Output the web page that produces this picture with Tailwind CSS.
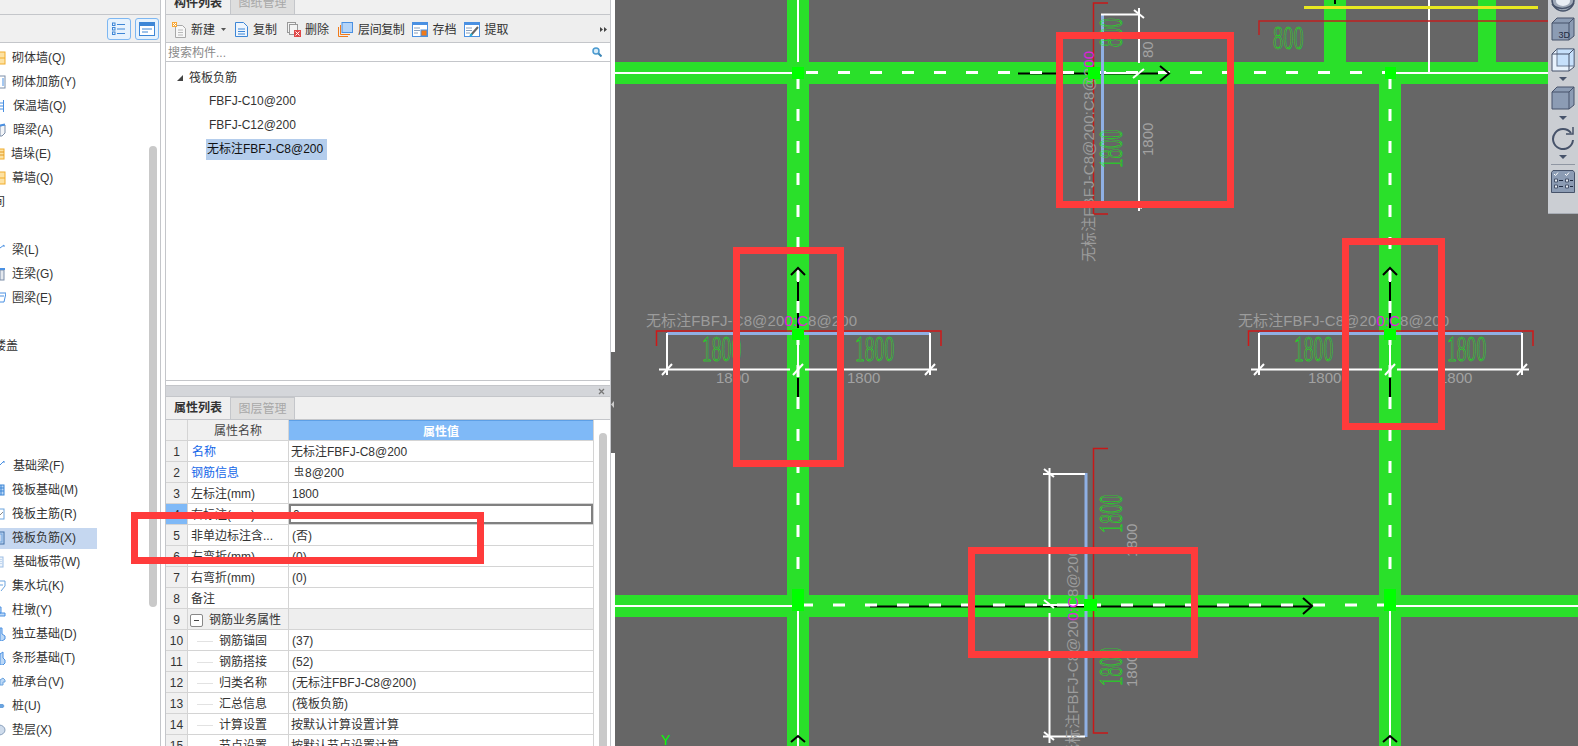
<!DOCTYPE html>
<html lang="zh">
<head>
<meta charset="UTF-8">
<title>筏板负筋</title>
<script src="https://cdn.jsdelivr.net/npm/@tailwindcss/browser@4"></script>
</head>
<body class="m-0 overflow-hidden bg-white">
<div class="relative flex w-[1578px] h-[746px] overflow-hidden bg-white text-[12px] leading-[16px] text-[#333] font-['Liberation_Sans','Noto_Sans_CJK_SC',sans-serif]">

  <!-- 左侧导航 -->
  <aside class="w-[161px] h-full shrink-0 relative overflow-hidden border-r border-[#c4c6ca]">
    <div class="h-[15px] bg-[#f0f0f0] border-b border-[#c4c6ca]"></div>
    <div class="h-[28px] bg-[#f0f0f0] border-b border-[#c4c6ca] flex items-center justify-end gap-[4px] pr-[1px]">
      <div class="w-[24px] h-[22px] rounded-[3px] border border-[#7db7f2] bg-[#e6f2fd] flex items-center justify-center">
        <svg width="14" height="14" viewBox="0 0 14 14" fill="none" stroke="#3d86d6"><path d="M5 2.5h8M5 7h8M5 11.5h8"/><rect x="0.5" y="1" width="2.5" height="2.5"/><rect x="0.5" y="5.5" width="2.5" height="2.5"/><rect x="0.5" y="10" width="2.5" height="2.5"/></svg>
      </div>
      <div class="w-[24px] h-[22px] rounded-[3px] border border-[#7db7f2] bg-[#e6f2fd] flex items-center justify-center">
        <svg width="16" height="14" viewBox="0 0 16 14" fill="none"><rect x="0.5" y="0.5" width="15" height="13" fill="#fff" stroke="#3d86d6"/><rect x="1" y="1" width="14" height="3" fill="#3d86d6"/><path d="M3 7h10M3 10h6" stroke="#3d86d6"/></svg>
      </div>
    </div>
    <div class="pt-[3px]">
      <div class="h-6 flex items-center"><svg class="shrink-0" width="6" height="14" viewBox="0 0 6 14"><rect x="-6" y="1" width="11" height="12" fill="#fde2a2" stroke="#f0ac2c"/><path d="M0 7h5" stroke="#f0ac2c"/></svg><span class="ml-[6px]">砌体墙(Q)</span></div>
      <div class="h-6 flex items-center"><svg class="shrink-0" width="6" height="14" viewBox="0 0 6 14"><rect x="-6" y="1" width="11" height="12" fill="#fff" stroke="#7d8ea8"/><path d="M3 3v8" stroke="#4a90e2"/></svg><span class="ml-[6px]">砌体加筋(Y)</span></div>
      <div class="h-6 flex items-center"><svg class="shrink-0" width="6" height="14" viewBox="0 0 6 14" fill="none" stroke="#4a90e2"><path d="M3.500 1v12M0 4h3M0 7h3M0 10h3"/></svg><span class="ml-[7px]">保温墙(Q)</span></div>
      <div class="h-6 flex items-center"><svg class="shrink-0" width="6" height="14" viewBox="0 0 6 14"><path d="M0 3l5-1v8l-3 3H0z" fill="#f3f5f8" stroke="#7d8ea8"/><path d="M0 2.500l5-1" stroke="#4a90e2" stroke-width="2"/></svg><span class="ml-[7px]">暗梁(A)</span></div>
      <div class="h-6 flex items-center"><svg class="shrink-0" width="5" height="14" viewBox="0 0 5 14"><rect x="-5" y="2" width="9" height="10" fill="#fde2a2" stroke="#f0ac2c"/><path d="M0 5h4M0 8h4" stroke="#e0961c"/></svg><span class="ml-[6px]">墙垛(E)</span></div>
      <div class="h-6 flex items-center"><svg class="shrink-0" width="6" height="14" viewBox="0 0 6 14"><rect x="-6" y="1" width="11" height="12" fill="#fde2a2" stroke="#f0ac2c"/><path d="M0 7h5" stroke="#f0ac2c"/></svg><span class="ml-[6px]">幕墙(Q)</span></div>
      <div class="h-6 flex items-center"><span class="ml-[-7px]">间</span></div>
      <div class="h-6"></div>
      <div class="h-6 flex items-center"><svg class="shrink-0" width="6" height="14" viewBox="0 0 6 14" fill="none" stroke="#4a90e2"><path d="M0 5l4-3v2"/></svg><span class="ml-[6px]">梁(L)</span></div>
      <div class="h-6 flex items-center"><svg class="shrink-0" width="6" height="14" viewBox="0 0 6 14"><rect x="0" y="3" width="4" height="10" fill="#e4e8ee" stroke="#7d8ea8"/><path d="M0 2h5" stroke="#4a90e2" stroke-width="2"/></svg><span class="ml-[6px]">连梁(G)</span></div>
      <div class="h-6 flex items-center"><svg class="shrink-0" width="6" height="14" viewBox="0 0 6 14" fill="none" stroke="#4a90e2"><path d="M0 2h6l-2 9H0M0 5h4"/></svg><span class="ml-[6px]">圈梁(E)</span></div>
      <div class="h-6"></div>
      <div class="h-6 flex items-center"><span class="ml-[-6px]">楼盖</span></div>
      <div class="h-6"></div>
      <div class="h-6"></div>
      <div class="h-6"></div>
      <div class="h-6"></div>
      <div class="h-6 flex items-center"><svg class="shrink-0" width="6" height="14" viewBox="0 0 6 14" fill="none" stroke="#4a90e2"><path d="M0 6l4-4v2"/></svg><span class="ml-[7px]">基础梁(F)</span></div>
      <div class="h-6 flex items-center"><svg class="shrink-0" width="6" height="14" viewBox="0 0 6 14"><rect x="-6" y="2" width="10" height="10" fill="#bcd8f6" stroke="#3d86d6"/><path d="M1 2v10M0 5h4M0 8h4" stroke="#3d86d6"/></svg><span class="ml-[6px]">筏板基础(M)</span></div>
      <div class="h-6 flex items-center"><svg class="shrink-0" width="6" height="14" viewBox="0 0 6 14" fill="none"><rect x="-6" y="2" width="10" height="10" fill="#fff" stroke="#6aa3de"/><path d="M0 8l3-3" stroke="#8a8a8a"/></svg><span class="ml-[6px]">筏板主筋(R)</span></div>
      <div class="h-6 flex items-center"><div class="w-[97px] h-[21px] bg-[#c5d7f0] flex items-center"><svg class="shrink-0" width="6" height="14" viewBox="0 0 6 14" fill="none"><rect x="-6" y="1" width="10" height="12" stroke="#3d6fa8"/><rect x="-2" y="3" width="4" height="8" stroke="#6aa3de"/></svg><span class="ml-[6px]">筏板负筋(X)</span></div></div>
      <div class="h-6 flex items-center"><svg class="shrink-0" width="6" height="14" viewBox="0 0 6 14" stroke="#9bbde4" fill="#eef4fb"><rect x="-4" y="2" width="7" height="10"/><path d="M1 4v6" stroke-dasharray="1 1"/></svg><span class="ml-[7px]">基础板带(W)</span></div>
      <div class="h-6 flex items-center"><svg class="shrink-0" width="6" height="14" viewBox="0 0 6 14" fill="none" stroke="#6aa3de"><path d="M0 2h5v5l-4 5M0 6h3"/></svg><span class="ml-[6px]">集水坑(K)</span></div>
      <div class="h-6 flex items-center"><svg class="shrink-0" width="6" height="14" viewBox="0 0 6 14" fill="#bcd8f6" stroke="#4a90e2"><path d="M-1 10h6v3h-6zM-1 4h2v6h-2z"/></svg><span class="ml-[6px]">柱墩(Y)</span></div>
      <div class="h-6 flex items-center"><svg class="shrink-0" width="6" height="14" viewBox="0 0 6 14" fill="#bcd8f6" stroke="#4a90e2"><path d="M0 1h2v6l3 2v3l-3 2H0z"/></svg><span class="ml-[6px]">独立基础(D)</span></div>
      <div class="h-6 flex items-center"><svg class="shrink-0" width="6" height="14" viewBox="0 0 6 14" fill="#bcd8f6" stroke="#4a90e2"><path d="M0 3l3-2v6l2 2v3l-2 2H0z"/></svg><span class="ml-[6px]">条形基础(T)</span></div>
      <div class="h-6 flex items-center"><svg class="shrink-0" width="6" height="14" viewBox="0 0 6 14" fill="#bcd8f6" stroke="#6aa3de"><path d="M0 5l3-2 2 2v2H3v3H0z"/></svg><span class="ml-[6px]">桩承台(V)</span></div>
      <div class="h-6 flex items-center"><svg class="shrink-0" width="6" height="14" viewBox="0 0 6 14" fill="#6aa3de"><path d="M0 5h3l1.500 2L3 9H0z"/></svg><span class="ml-[6px]">桩(U)</span></div>
      <div class="h-6 flex items-center"><svg class="shrink-0" width="6" height="14" viewBox="0 0 6 14"><ellipse cx="-1" cy="7" rx="6" ry="5" fill="#cfdcec" stroke="#8aa0bc"/></svg><span class="ml-[6px]">垫层(X)</span></div>
    </div>
    <div class="absolute left-[149px] top-[146px] w-[8px] h-[461px] rounded-[4px] bg-[#c9c9c9]"></div>
  </aside>

  <div class="w-[4px] shrink-0"></div>

  <!-- 构件列表 + 属性列表 -->
  <section class="w-[446px] h-full shrink-0 border-x border-[#c4c6ca] flex flex-col">
    <div class="h-[15px] bg-[#f0f0f0] flex overflow-hidden border-b border-[#c4c6ca]">
      <div class="w-[65px] flex items-end justify-center pb-[3px] font-bold text-[#333] border-r border-[#c4c6ca]">构件列表</div>
      <div class="w-[64px] flex items-end justify-center pb-[3px] bg-[#dedede] text-[#a8a8a8] border-r border-[#c4c6ca]">图纸管理</div>
    </div>
    <div class="h-[28px] pt-[2px] bg-[#eeeeee] border-b border-[#c4c6ca] flex items-center">
      <svg class="ml-[6px] shrink-0" width="15" height="16" viewBox="0 0 15 16"><path d="M3.500 3.500h7l3 3v9h-10z" fill="#f7f7f7" stroke="#a8a8a8"/><path d="M6 8h5M6 10.500h5M6 13h5" stroke="#b8b8b8"/><path d="M0 0h5v5H0z" fill="#f8a838"/><path d="M1 1l3 3M4 1L1 4" stroke="#fff"/></svg>
      <span class="ml-[4px]">新建</span>
      <svg class="ml-[6px] shrink-0" width="5" height="3" viewBox="0 0 5 3"><path d="M0 0h5L2.500 3z" fill="#555"/></svg>
      <svg class="ml-[9px] shrink-0" width="13" height="15" viewBox="0 0 13 15"><path d="M.5.500h8l4 4v10H.5z" fill="#eef5fd" stroke="#3d86d6"/><path d="M3 7h7M3 9.500h7M3 12h7" stroke="#3d86d6"/></svg>
      <span class="ml-[5px]">复制</span>
      <svg class="ml-[10px] shrink-0" width="14" height="15" viewBox="0 0 14 15"><rect x=".5" y=".5" width="8" height="10" fill="#f4f4f4" stroke="#999"/><rect x="2.500" y="2.500" width="8" height="10" fill="#f4f4f4" stroke="#999"/><rect x="7" y="8" width="7" height="7" fill="#e04848"/><path d="M8.500 9.500l4 4M12.500 9.500l-4 4" stroke="#fff"/></svg>
      <span class="ml-[4px]">删除</span>
      <svg class="ml-[9px] shrink-0" width="15" height="15" viewBox="0 0 15 15"><path d="M.5 5v9.500H10M2.500 3v9.500H12" fill="none" stroke="#f07a1a"/><rect x="4" y=".5" width="10.500" height="10" fill="#b4d4f8" stroke="#4a90e2"/></svg>
      <span class="ml-[5px] tracking-[-0.4px]">层间复制</span>
      <svg class="ml-[8px] shrink-0" width="16" height="15" viewBox="0 0 16 15"><rect x=".5" y=".5" width="15" height="14" fill="#fff" stroke="#4a90e2"/><rect x="0" y="0" width="16" height="3" fill="#4a90e2"/><path d="M2 6h6M2 8.500h6M2 11h4" stroke="#8aa0bc"/><rect x="9" y="8" width="6" height="6" fill="#f07a1a" stroke="#4a90e2"/></svg>
      <span class="ml-[4px]">存档</span>
      <svg class="ml-[8px] shrink-0" width="16" height="15" viewBox="0 0 16 15"><rect x=".5" y=".5" width="15" height="14" fill="#fff" stroke="#4a90e2"/><rect x="0" y="0" width="16" height="3" fill="#4a90e2"/><path d="M2 6h6M2 8.500h6M2 11h4" stroke="#8aa0bc"/><path d="M7 13l7-8" stroke="#666" stroke-width="2"/><path d="M6 14l2-2" stroke="#20b0d8" stroke-width="2"/></svg>
      <span class="ml-[4px]">提取</span>
      <svg class="ml-auto mr-[3px] shrink-0" width="7" height="5" viewBox="0 0 7 5" fill="#444"><path d="M0 0l3 2.500L0 5zM4 0l3 2.500L4 5z"/></svg>
    </div>
    <div class="h-[19px] pt-[2px] bg-white border-b border-[#c4c6ca] flex items-center pl-[2px] pr-[8px] text-[#8a8a8a]">
      <span>搜索构件...</span>
      <svg class="ml-auto -mt-[2px]" width="10" height="10" viewBox="0 0 10 10" fill="none"><circle cx="4" cy="4" r="3" fill="#d8ecf8" stroke="#4a9ad0" stroke-width="1.500"/><path d="M6.500 6.500L9.500 9.500" stroke="#3d86b6" stroke-width="2"/></svg>
    </div>
    <div class="h-[319px] border-b border-[#c4c6ca] bg-white relative pt-[3px]">
      <div class="h-6 pt-[1px] flex items-center">
        <svg class="ml-[11px] shrink-0" width="6" height="6" viewBox="0 0 6 6"><path d="M6 0v6H0z" fill="#444"/></svg>
        <span class="ml-[6px]">筏板负筋</span>
      </div>
      <div class="h-6 flex items-center pl-[43px]">FBFJ-C10@200</div>
      <div class="h-6 flex items-center pl-[43px]">FBFJ-C12@200</div>
      <div class="h-6 flex items-center"><div class="ml-[40px] w-[121px] h-[21px] bg-[#b4cdec] flex items-center pl-[1px] text-[#111]">无标注FBFJ-C8@200</div></div>
    </div>
    <div class="h-[4px]"></div>
    <div class="h-[12px] bg-[#d4d6da] border-y border-[#c4c6ca] flex items-center justify-end pr-[5px]">
      <svg width="7" height="7" viewBox="0 0 7 7" stroke="#777" stroke-width="1.300"><path d="M1 1l5 5M6 1L1 6"/></svg>
    </div>
    <div class="h-[23px] bg-[#f0f0f0] border-b border-[#c4c6ca] flex">
      <div class="w-[65px] flex items-center justify-center font-bold border-r border-[#c4c6ca]">属性列表</div>
      <div class="w-[64px] flex items-center justify-center bg-[#dedede] text-[#a8a8a8] border-r border-t border-[#c4c6ca]">图层管理</div>
    </div>
    <div class="flex flex-1 overflow-hidden">
      <div class="w-[428px] shrink-0 border-r border-[#d4d4d4] [&>div>div]:pt-[2px]">
        <div class="flex h-[21px] border-b border-[#d4d4d4]">
          <div class="w-[22px] bg-[#f0f0f0] border-r border-[#d4d4d4]"></div>
          <div class="w-[101px] bg-[#f0f0f0] border-r border-[#d4d4d4] flex items-center justify-center text-[#444]">属性名称</div>
          <div class="flex-1 bg-[#7fb9f7] border-t border-[#5d9fe6] flex items-center justify-center font-bold text-white">属性值</div>
        </div>
        <div class="flex h-[21px] border-b border-[#d4d4d4]"><div class="w-[22px] bg-[#f0f0f0] border-r border-[#d4d4d4] flex items-center justify-center">1</div><div class="w-[101px] border-r border-[#d4d4d4] flex items-center pl-[4px] text-[#1668e8]">名称</div><div class="flex-1 flex items-center pl-[2px]">无标注FBFJ-C8@200</div></div>
        <div class="flex h-[21px] border-b border-[#d4d4d4]"><div class="w-[22px] bg-[#f0f0f0] border-r border-[#d4d4d4] flex items-center justify-center">2</div><div class="w-[101px] border-r border-[#d4d4d4] flex items-center pl-[3px] text-[#1668e8]">钢筋信息</div><div class="flex-1 flex items-center pl-[4px]"><span class="text-[10px] -mt-[3px] mr-[1px] pl-[1px]">虫</span>8@200</div></div>
        <div class="flex h-[21px] border-b border-[#d4d4d4]"><div class="w-[22px] bg-[#f0f0f0] border-r border-[#d4d4d4] flex items-center justify-center">3</div><div class="w-[101px] border-r border-[#d4d4d4] flex items-center pl-[3px]">左标注(mm)</div><div class="flex-1 flex items-center pl-[3px]">1800</div></div>
        <div class="flex h-[21px] border-b border-[#d4d4d4]"><div class="w-[22px] bg-[#7fb9f7] border-r border-[#d4d4d4] flex items-center justify-center">4</div><div class="w-[101px] border-r border-[#d4d4d4] flex items-center pl-[3px]">右标注(mm)</div><div class="flex-1 flex items-center pl-[2px] border-2 border-[#808080]">0</div></div>
        <div class="flex h-[21px] border-b border-[#d4d4d4]"><div class="w-[22px] bg-[#f0f0f0] border-r border-[#d4d4d4] flex items-center justify-center">5</div><div class="w-[101px] border-r border-[#d4d4d4] flex items-center pl-[3px]">非单边标注含...</div><div class="flex-1 flex items-center pl-[3px]">(否)</div></div>
        <div class="flex h-[21px] border-b border-[#d4d4d4]"><div class="w-[22px] bg-[#f0f0f0] border-r border-[#d4d4d4] flex items-center justify-center">6</div><div class="w-[101px] border-r border-[#d4d4d4] flex items-center pl-[3px]">左弯折(mm)</div><div class="flex-1 flex items-center pl-[3px]">(0)</div></div>
        <div class="flex h-[21px] border-b border-[#d4d4d4]"><div class="w-[22px] bg-[#f0f0f0] border-r border-[#d4d4d4] flex items-center justify-center">7</div><div class="w-[101px] border-r border-[#d4d4d4] flex items-center pl-[3px]">右弯折(mm)</div><div class="flex-1 flex items-center pl-[3px]">(0)</div></div>
        <div class="flex h-[21px] border-b border-[#d4d4d4]"><div class="w-[22px] bg-[#f0f0f0] border-r border-[#d4d4d4] flex items-center justify-center">8</div><div class="w-[101px] border-r border-[#d4d4d4] flex items-center pl-[3px]">备注</div><div class="flex-1"></div></div>
        <div class="flex h-[21px] border-b border-[#d4d4d4]"><div class="w-[22px] bg-[#f0f0f0] border-r border-[#d4d4d4] flex items-center justify-center">9</div><div class="w-[101px] border-r border-[#d4d4d4] bg-[#f0f0f0] flex items-center pl-[2px]"><span class="w-[13px] h-[13px] rounded-[2px] border border-[#888] bg-white flex items-center justify-center"><span class="block w-[5px] h-px bg-[#444]"></span></span><span class="ml-[6px]">钢筋业务属性</span></div><div class="flex-1 bg-[#eeeeee]"></div></div>
        <div class="flex h-[21px] border-b border-[#d4d4d4]"><div class="w-[22px] bg-[#f0f0f0] border-r border-[#d4d4d4] flex items-center justify-center">10</div><div class="w-[101px] border-r border-[#d4d4d4] flex items-center pl-[9px]"><span class="block w-[16px] h-px bg-[#e2e2e2]"></span><span class="ml-[6px]">钢筋锚固</span></div><div class="flex-1 flex items-center pl-[3px]">(37)</div></div>
        <div class="flex h-[21px] border-b border-[#d4d4d4]"><div class="w-[22px] bg-[#f0f0f0] border-r border-[#d4d4d4] flex items-center justify-center">11</div><div class="w-[101px] border-r border-[#d4d4d4] flex items-center pl-[9px]"><span class="block w-[16px] h-px bg-[#e2e2e2]"></span><span class="ml-[6px]">钢筋搭接</span></div><div class="flex-1 flex items-center pl-[3px]">(52)</div></div>
        <div class="flex h-[21px] border-b border-[#d4d4d4]"><div class="w-[22px] bg-[#f0f0f0] border-r border-[#d4d4d4] flex items-center justify-center">12</div><div class="w-[101px] border-r border-[#d4d4d4] flex items-center pl-[9px]"><span class="block w-[16px] h-px bg-[#e2e2e2]"></span><span class="ml-[6px]">归类名称</span></div><div class="flex-1 flex items-center pl-[3px]">(无标注FBFJ-C8@200)</div></div>
        <div class="flex h-[21px] border-b border-[#d4d4d4]"><div class="w-[22px] bg-[#f0f0f0] border-r border-[#d4d4d4] flex items-center justify-center">13</div><div class="w-[101px] border-r border-[#d4d4d4] flex items-center pl-[9px]"><span class="block w-[16px] h-px bg-[#e2e2e2]"></span><span class="ml-[6px]">汇总信息</span></div><div class="flex-1 flex items-center pl-[3px]">(筏板负筋)</div></div>
        <div class="flex h-[21px] border-b border-[#d4d4d4]"><div class="w-[22px] bg-[#f0f0f0] border-r border-[#d4d4d4] flex items-center justify-center">14</div><div class="w-[101px] border-r border-[#d4d4d4] flex items-center pl-[9px]"><span class="block w-[16px] h-px bg-[#e2e2e2]"></span><span class="ml-[6px]">计算设置</span></div><div class="flex-1 flex items-center pl-[2px]">按默认计算设置计算</div></div>
        <div class="flex h-[21px] border-b border-[#d4d4d4]"><div class="w-[22px] bg-[#f0f0f0] border-r border-[#d4d4d4] flex items-center justify-center">15</div><div class="w-[101px] border-r border-[#d4d4d4] flex items-center pl-[9px]"><span class="block w-[16px] h-px bg-[#e2e2e2]"></span><span class="ml-[6px]">节点设置</span></div><div class="flex-1 flex items-center pl-[2px]">按默认节点设置计算</div></div>
      </div>
      <div class="flex-1 relative">
        <div class="absolute left-[5px] top-[13px] w-[8px] h-[400px] rounded-[4px] bg-[#c9c9c9]"></div>
      </div>
    </div>
  </section>

  <!-- 分隔条 -->
  <div class="w-[4px] shrink-0 relative">
    <div class="absolute left-0 top-[352px] w-[4px] h-[101px] bg-[#666] flex items-center justify-center">
      <svg width="4" height="7" viewBox="0 0 4 7" class="mt-[4px]"><path d="M3 0v7L0 3.500z" fill="#ccc"/></svg>
    </div>
  </div>

  <!-- 绘图区 -->
  <main class="relative flex-1 h-full bg-[#666666] overflow-hidden">
    <svg class="block" width="963" height="746" viewBox="615 0 963 746" fill="none">
      <defs>
        <g id="cross">
          <path d="M656.500 346v-15h284.500v15" stroke="#d01818" stroke-width="1.500"/>
          <path d="M667 333.500h263" stroke="#8fb0e4" stroke-width="3"/>
          <path d="M667 333v42M930 333v42" stroke="#fff" stroke-width="2"/>
          <path d="M659 369.500h131M805 369.500h132" stroke="#fff" stroke-width="2"/>
          <path d="M662 375l10-11M925 375l10-11M793 375l10-11" stroke="#fff" stroke-width="2"/>
          <path d="M798 268v14M798 340v27" stroke="#fff" stroke-width="2"/>
          <path d="M791 275l7-7 7 7" stroke="#000" stroke-width="2"/>
          <text x="646" y="326" font-family="Liberation Sans, Noto Sans CJK SC, sans-serif" font-size="15" fill="#9c9c9c" textLength="211">无标注FBFJ-C8@20<tspan fill="#e020e0">0:C</tspan>8@200</text>
          <g font-family="Liberation Serif, serif" font-size="35" stroke="#0f0" stroke-width=".55" fill="none">
            <text transform="translate(702,361) scale(.56,1)">1800</text>
            <text transform="translate(855,361) scale(.56,1)">1800</text>
          </g>
          <g font-family="Liberation Sans, sans-serif" font-size="15" fill="#a2a2a2">
            <text x="716" y="383">1800</text>
            <text x="847" y="383">1800</text>
          </g>
        </g>
      </defs>

      <!-- 梁 -->
      <g fill="#2ae02a">
        <rect x="615" y="62" width="963" height="22"/>
        <rect x="615" y="595" width="963" height="22"/>
        <rect x="787" y="0" width="22" height="746"/>
        <rect x="1379" y="72" width="22" height="674"/>
        <rect x="1324" y="0" width="22" height="62"/>
        <rect x="1478" y="0" width="18" height="62"/>
      </g>

      <!-- 轴线 -->
      <g stroke="#fff" stroke-width="2">
        <path d="M615 73h177M798 0v62M1396 73h160M1429 0v73"/>
        <path d="M615 606h177M798 611v135M1396 606h182M1390 611v135"/>
      </g>
      <path d="M1018 73.500h140M870 606.500h442M798 282v46M798 378v19M1390 282v46M1390 378v19" stroke="#000" stroke-width="2"/>
      <g stroke="#fff" stroke-width="3" stroke-dasharray="12 20">
        <path d="M806 72.500H1385"/>
        <path d="M801 605H1384"/>
        <path d="M798 77V589"/>
        <path d="M1390 77V589"/>
      </g>
      <path d="M1100 73h33M1043 605h41" stroke="#fff" stroke-width="2"/>
      <path d="M1160 66l9 7.500-9 7.500" stroke="#000" stroke-width="2"/>
      <path d="M1303 598l9 8-9 8" stroke="#000" stroke-width="2"/>
      <path d="M1335 0v4" stroke="#000" stroke-width="2"/>
      <path d="M791 742l7-6 7 6M1383 742l7-6 7 6" stroke="#000" stroke-width="2"/>
      <path d="M1304 7.500h234" stroke="#e8e820" stroke-width="3"/>
      <path d="M1259 35V21h289" stroke="#c02020" stroke-width="1.500"/>
      <text transform="translate(1273,49) scale(.6,1)" font-family="Liberation Serif, serif" font-size="34" stroke="#0f0" stroke-width=".55">800</text>

      <use href="#cross"/>
      <use href="#cross" x="592"/>

      <!-- 顶部竖向钢筋 -->
      <path d="M1108 3h-14.500v211h14.500" stroke="#c81818" stroke-width="1.500"/>
      <path d="M1102.500 14v188" stroke="#8fb0e4" stroke-width="3"/>
      <path d="M1101 14.500h38M1139 8v55M1139 80v131" stroke="#fff" stroke-width="2"/>
      <path d="M1134 10l10 8M1133 78l11 -9M1134 204l8 4" stroke="#fff" stroke-width="2"/>
      <text transform="translate(1094,262) rotate(-90)" font-family="Liberation Sans, Noto Sans CJK SC, sans-serif" font-size="15" fill="#9c9c9c" textLength="211">无标注FBFJ-C8@200:C8@2<tspan fill="#e020e0">00</tspan></text>
      <g font-family="Liberation Serif, serif" font-size="33" stroke="#0f0" stroke-width=".55">
        <text transform="translate(1122,168) rotate(-90) scale(.58,1)">1800</text>
        <text transform="translate(1122,47) rotate(-90) scale(.58,1)">800</text>
      </g>
      <g font-family="Liberation Sans, sans-serif" font-size="15" fill="#a2a2a2">
        <text transform="translate(1153,156) rotate(-90)">1800</text>
        <text transform="translate(1153,58) rotate(-90)">80</text>
      </g>

      <!-- 底部竖向钢筋 -->
      <path d="M1108 448.500h-14.500v284.500h14.500" stroke="#c81818" stroke-width="1.500"/>
      <path d="M1086 473v264" stroke="#8fb0e4" stroke-width="3"/>
      <path d="M1043 474h42M1043 736.500h42M1049.500 468v131M1049.500 613v130" stroke="#fff" stroke-width="2"/>
      <path d="M1044 469l10 8M1044 600l10 8M1044 732l10 8" stroke="#fff" stroke-width="2"/>
      <text transform="translate(1078,759) rotate(-90)" font-family="Liberation Sans, Noto Sans CJK SC, sans-serif" font-size="15" fill="#9c9c9c" textLength="211">无标注FBFJ-C8@20<tspan fill="#e020e0">0:C</tspan>8@200</text>
      <g font-family="Liberation Serif, serif" font-size="33" stroke="#0f0" stroke-width=".55">
        <text transform="translate(1122,533) rotate(-90) scale(.58,1)">1800</text>
        <text transform="translate(1122,686) rotate(-90) scale(.58,1)">1800</text>
      </g>
      <g font-family="Liberation Sans, sans-serif" font-size="15" fill="#a2a2a2">
        <text transform="translate(1137,557) rotate(-90)">1800</text>
        <text transform="translate(1137,687) rotate(-90)">1800</text>
      </g>

      <!-- 节点 -->
      <g fill="#00ff00">
        <rect x="792" y="67" width="12" height="12"/>
        <rect x="1385" y="67" width="11" height="12"/>
        <rect x="1088" y="67" width="12" height="12"/>
        <rect x="792" y="329" width="12" height="11"/>
        <rect x="1384" y="329" width="12" height="11"/>
        <rect x="792" y="589" width="12" height="22"/>
        <rect x="1084" y="599" width="13" height="12"/>
        <rect x="1384" y="589" width="12" height="22"/>
      </g>
      <text x="661" y="745" font-family="Liberation Sans, sans-serif" font-size="14" fill="#00ff00">Y</text>

      <!-- 标记框 -->
      <g stroke="#ff3b3b" stroke-width="7">
        <rect x="1059.500" y="35.500" width="171" height="169"/>
        <rect x="736.500" y="250.500" width="104" height="213"/>
        <rect x="1345.500" y="241.500" width="96" height="185"/>
        <rect x="971.500" y="550.500" width="223" height="104"/>
      </g>
    </svg>

    <!-- 右侧工具条 -->
    <div class="absolute left-[933px] top-0 w-[30px] h-[214px] bg-[#cbced3] border-b border-[#a8adb5] flex flex-col items-center">
      <svg class="shrink-0" width="24" height="14" viewBox="0 8 24 14"><circle cx="12" cy="8" r="11" fill="#9fa9b8" stroke="#47536a" stroke-width="1.500"/><ellipse cx="12" cy="9" rx="7" ry="5" fill="#e8edf4"/><path d="M1 12c5 6 16 6 22-1" stroke="#47536a" stroke-width="1.500" fill="none"/></svg>
      <svg class="mt-[3px] shrink-0" width="24" height="24" viewBox="0 0 24 24" stroke="#47536a"><path d="M1 6l5-5h17v18l-5 4H1z" fill="#8c9cb4"/><path d="M1 6h17v17M18 6l5-5" fill="none"/><text x="7.500" y="21" font-family="Liberation Sans, sans-serif" font-size="9" stroke="none" fill="#1e2a40">3D</text></svg>
      <svg class="mt-[7px] shrink-0" width="24" height="24" viewBox="0 0 24 24" stroke="#47536a"><path d="M1 6l5-5h17v18l-5 4H1z" fill="#e8f2fd"/><rect x="6" y="1" width="17" height="17" fill="#c6e0fb" stroke="#6a7a92"/><path d="M1 6h17v17M18 6l5-5" fill="none"/></svg>
      <svg class="mt-[5px] shrink-0" width="8" height="4" viewBox="0 0 8 4"><path d="M0 0h8L4 4z" fill="#47536a"/></svg>
      <svg class="mt-[5px] shrink-0" width="24" height="24" viewBox="0 0 24 24" stroke="#47536a"><path d="M1 6l5-5h17v18l-5 4H1z" fill="#8c9cb4"/><path d="M1 6h17v17M18 6l5-5" fill="none"/></svg>
      <svg class="mt-[6px] shrink-0" width="8" height="4" viewBox="0 0 8 4"><path d="M0 0h8L4 4z" fill="#47536a"/></svg>
      <svg class="mt-[6px] shrink-0" width="24" height="24" viewBox="0 0 24 24" fill="none" stroke="#47536a" stroke-width="2"><path d="M20 7A10 10 0 1 0 22 14"/><path d="M22 1v7h-7" stroke-width="1.500"/></svg>
      <svg class="mt-[5px] shrink-0" width="8" height="4" viewBox="0 0 8 4"><path d="M0 0h8L4 4z" fill="#47536a"/></svg>
      <div class="mt-[5px] w-[24px] h-px bg-[#8f96a2]"></div>
      <svg class="mt-[5px] shrink-0" width="24" height="23" viewBox="0 0 24 23" stroke="#47536a"><path d="M2 .5h20l1.500 2v20H.5v-20z" fill="#8c9cb4"/><path d="M3 4l1.500 1.500L7 2.500M14 4l1.500 1.500L18 2.500" stroke="#fff" fill="none"/><path d="M3.500 9h3v3h-3zM3.500 15h3v3h-3zM14.500 9h3v3h-3zM14.500 15h3v3h-3z" fill="#e8edf4"/><path d="M8 10.500h4M8 16.500h4M19 10.500h3M19 16.500h3" stroke="#1e2a40"/></svg>
    </div>
  </main>

  <!-- 左下标记框 -->
  <div class="absolute left-[131px] top-[512px] w-[353px] h-[52px] border-[7px] border-[#ff3b3b]"></div>
</div>
</body>
</html>
